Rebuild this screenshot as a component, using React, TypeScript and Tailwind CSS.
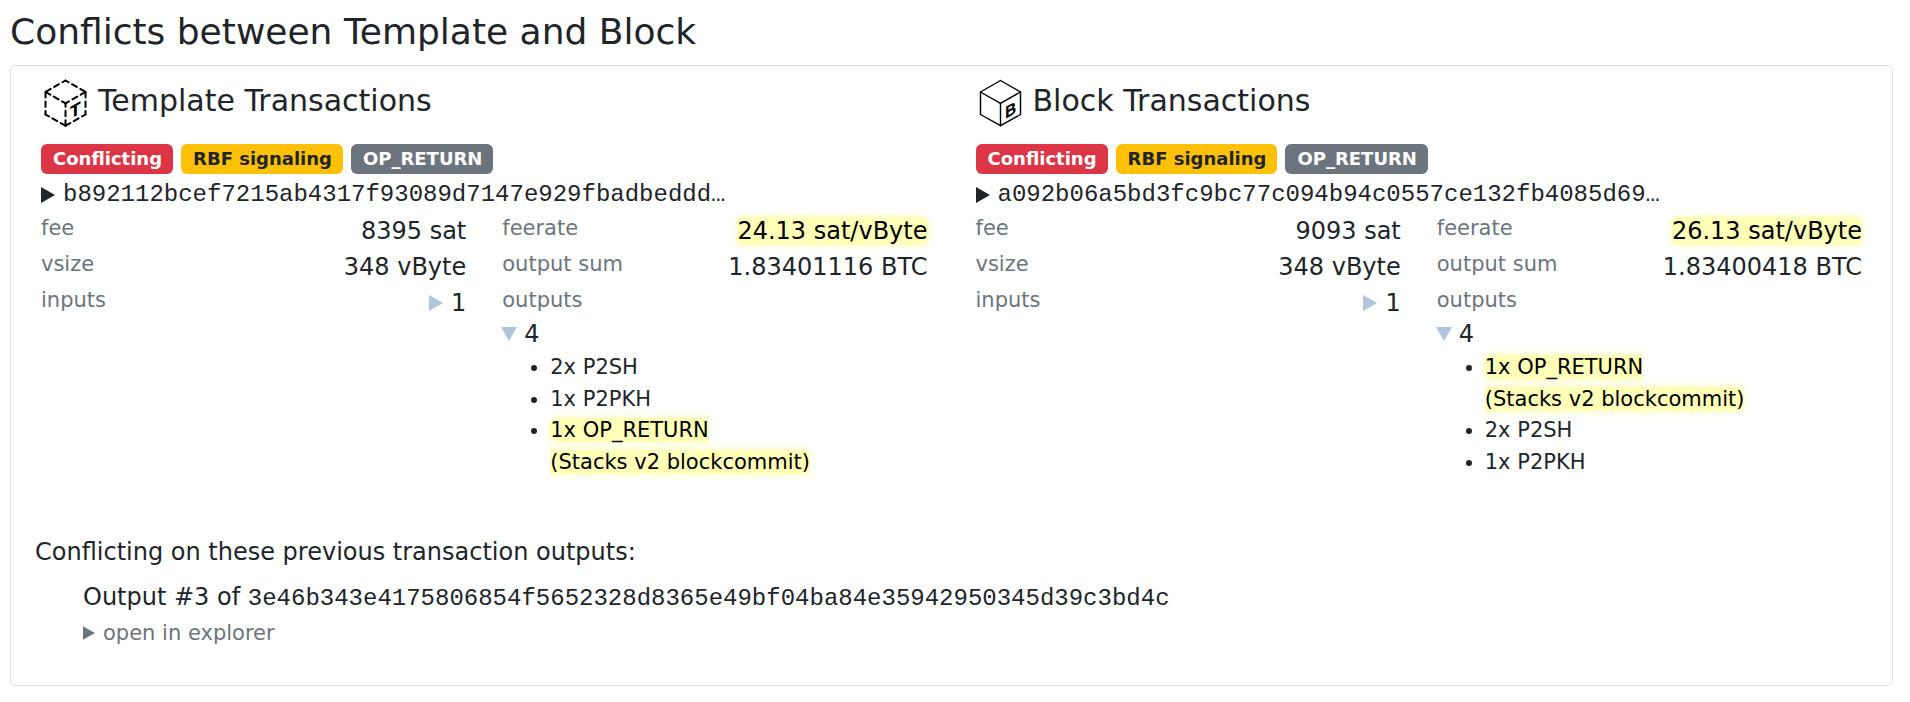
import type { ReactNode } from 'react'

type Output = {
  label: string
  note?: string
}

type Transaction = {
  txid: string
  fee: string
  vsize: string
  inputs: number
  feerate: string
  outputSum: string
  outputCount: number
  outputs: Output[]
}

const templateTx: Transaction = {
  txid: 'b892112bcef7215ab4317f93089d7147e929fbadbeddd…',
  fee: '8395 sat',
  vsize: '348 vByte',
  inputs: 1,
  feerate: '24.13 sat/vByte',
  outputSum: '1.83401116 BTC',
  outputCount: 4,
  outputs: [
    { label: '2x P2SH' },
    { label: '1x P2PKH' },
    { label: '1x OP_RETURN', note: '(Stacks v2 blockcommit)' },
  ],
}

const blockTx: Transaction = {
  txid: 'a092b06a5bd3fc9bc77c094b94c0557ce132fb4085d69…',
  fee: '9093 sat',
  vsize: '348 vByte',
  inputs: 1,
  feerate: '26.13 sat/vByte',
  outputSum: '1.83400418 BTC',
  outputCount: 4,
  outputs: [
    { label: '1x OP_RETURN', note: '(Stacks v2 blockcommit)' },
    { label: '2x P2SH' },
    { label: '1x P2PKH' },
  ],
}

const badges = [
  { label: 'Conflicting', className: 'bg-[#dc3545] text-white' },
  { label: 'RBF signaling', className: 'bg-[#ffc107] text-[#212529]' },
  { label: 'OP_RETURN', className: 'bg-[#6c757d] text-white' },
]

const CubeIcon = ({ letter, dashed = false }: { letter: string; dashed?: boolean }) => (
  <svg
    viewBox="0 0 48 48"
    className="h-12 w-12 shrink-0"
    fill="none"
    stroke="#000"
    strokeWidth={dashed ? 2 : 1.4}
    strokeLinecap="round"
    strokeLinejoin="round"
    strokeDasharray={dashed ? '5.5 4' : undefined}
    aria-hidden="true"
  >
    <path d="M24.5 1.5 L4.5 13" strokeDashoffset={dashed ? 2 : undefined} />
    <path d="M24.5 1.5 L44.5 13" strokeDashoffset={dashed ? 2 : undefined} />
    <path d="M4.5 13 L24.5 24.3" />
    <path d="M44.5 13 L24.5 24.3" />
    <path d="M4.5 13 V35.5" />
    <path d="M44.5 13 V35.5" />
    <path d="M24.5 46.7 V24.3" />
    <path d="M24.5 46.7 L4.5 35.5" />
    <path d="M24.5 46.7 L44.5 35.5" />
    <text
      transform="translate(34.5 36.5) skewY(-29)"
      textAnchor="middle"
      fill="#000"
      strokeWidth={dashed ? 1.2 : 0.8}
      strokeDasharray="none"
      className="font-['Liberation_Sans'] text-[16px]"
    >
      {letter}
    </text>
  </svg>
)

const Highlight = ({ children }: { children: ReactNode }) => (
  <mark className="rounded-md bg-[#ffffb8] text-black shadow-[0_0_9px_#ffffb8]">{children}</mark>
)

type DisclosureProps = {
  summary: ReactNode
  markerClassName?: string
  open?: boolean
  children?: ReactNode
}

const Disclosure = ({ summary, markerClassName = 'h-4 w-3.5', open, children }: DisclosureProps) => (
  <details open={open} className="group">
    <summary className="flex cursor-pointer items-center gap-2">
      <svg
        viewBox="0 0 14 16"
        className={`shrink-0 fill-current group-open:rotate-90 ${markerClassName}`}
        aria-hidden="true"
      >
        <path d="M0 0 L14 8 L0 16 Z" />
      </svg>
      {summary}
    </summary>
    {children}
  </details>
)

const Field = ({ label, children }: { label: string; children: ReactNode }) => (
  <div className="flex justify-between">
    <span className="text-[21px] leading-[31px] text-[#6c757d]">{label}</span>
    <span className="leading-9">{children}</span>
  </div>
)

const TransactionPanel = ({ title, icon, tx }: { title: string; icon: ReactNode; tx: Transaction }) => (
  <section className="px-6">
    <div className="flex items-center gap-[9px]">
      {icon}
      <h2 className="pb-1 text-[30px] leading-9">{title}</h2>
    </div>

    <div className="mt-[17px] mb-[3px] flex gap-2">
      {badges.map(badge => (
        <span
          key={badge.label}
          className={`rounded-md py-1.5 pr-[11px] pl-3 text-[18px] leading-[18px] font-bold ${badge.className}`}
        >
          {badge.label}
        </span>
      ))}
    </div>

    <div className="leading-9">
      <Disclosure summary={<span className="font-['Liberation_Mono',monospace]">{tx.txid}</span>} />
    </div>

    <div className="grid grid-cols-2 gap-9">
      <div>
        <Field label="fee">{tx.fee}</Field>
        <Field label="vsize">{tx.vsize}</Field>
        <Field label="inputs">
          <Disclosure summary={tx.inputs} markerClassName="h-4 w-3.5 text-[#b0c4de]" />
        </Field>
      </div>
      <div>
        <Field label="feerate">
          <Highlight>{tx.feerate}</Highlight>
        </Field>
        <Field label="output sum">{tx.outputSum}</Field>
        <div className="text-[21px] leading-[31px] text-[#6c757d]">outputs</div>
        <div className="leading-9">
          <Disclosure summary={tx.outputCount} markerClassName="h-4 w-3.5 text-[#b0c4de]" open>
            <ul className="list-disc pl-12 text-[21px] leading-normal">
              {tx.outputs.map(output => (
                <li key={output.label}>
                  {output.note ? (
                    <Highlight>
                      {output.label}
                      <br />
                      {output.note}
                    </Highlight>
                  ) : (
                    output.label
                  )}
                </li>
              ))}
            </ul>
          </Disclosure>
        </div>
      </div>
    </div>
  </section>
)

const App = () => (
  <main className="bg-white pt-2.5 pr-[17px] pb-4 pl-2.5 font-['DejaVu_Sans',sans-serif] text-[24px] text-[#212529]">
    <h1 className="text-[36px] leading-[43px]">Conflicts between Template and Block</h1>

    <div className="mt-3 rounded-md border border-[#dfdfdf] px-1.5 pt-[13px] pb-9">
      <div className="grid grid-cols-2">
        <TransactionPanel title="Template Transactions" icon={<CubeIcon letter="T" dashed />} tx={templateTx} />
        <TransactionPanel title="Block Transactions" icon={<CubeIcon letter="B" />} tx={blockTx} />
      </div>

      <div className="mt-14 px-[18px]">
        <p className="leading-9">Conflicting on these previous transaction outputs:</p>
        <div className="mt-[9px] pl-12">
          <p className="leading-9">
            Output #3 of{' '}
            <span className="font-['Liberation_Mono',monospace]">
              3e46b343e4175806854f5652328d8365e49bf04ba84e35942950345d39c3bd4c
            </span>
          </p>
          <div className="text-[21px] leading-8 text-[#6c757d]">
            <Disclosure summary="open in explorer" markerClassName="h-3.5 w-3" />
          </div>
        </div>
      </div>
    </div>
  </main>
)

export default App
